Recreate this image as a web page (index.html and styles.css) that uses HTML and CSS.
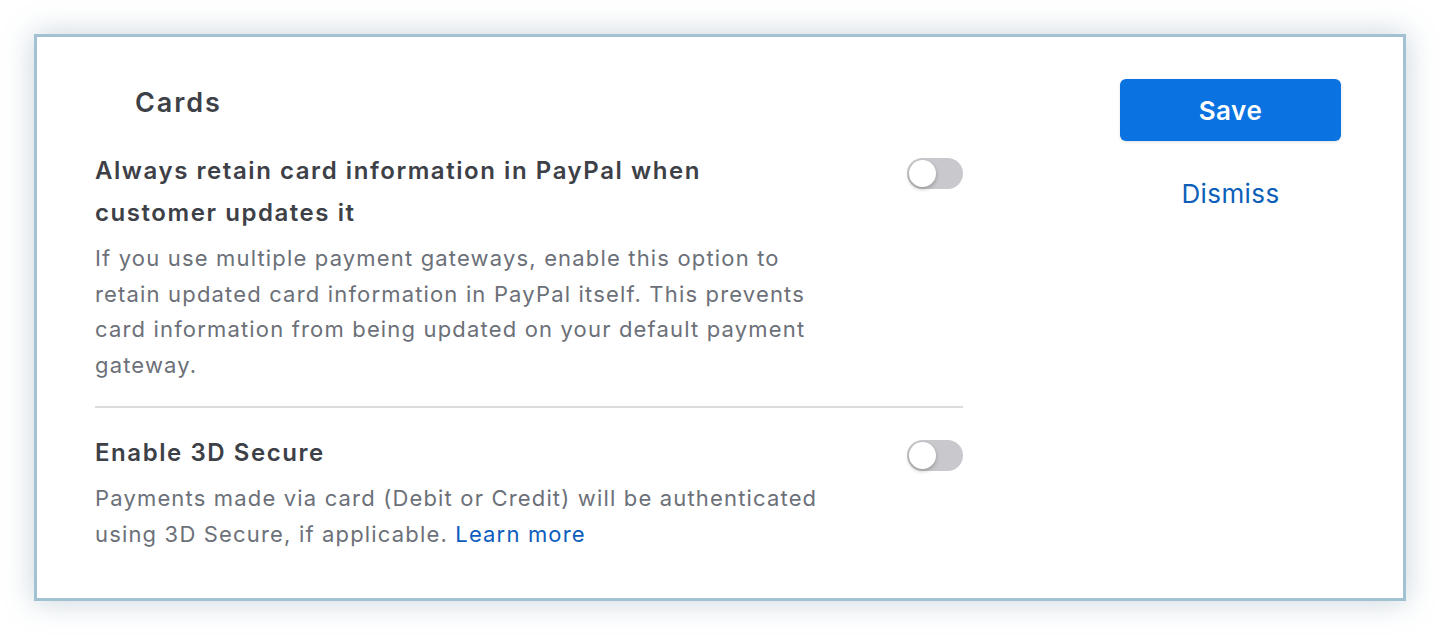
FILE: index.html
```html
<!DOCTYPE html>
<html lang="en">
<head>
    <meta charset="UTF-8">
    <meta name="viewport" content="width=device-width, initial-scale=1.0">
    <title>Cards</title>
    <link rel="stylesheet" href="styles.css">
</head>

<body>

    <section class="panel">
        <div class="settings">
            <h2 class="settings-title">Cards</h2>

            <div class="option">
                <div class="option-text">
                    <h3>Always retain card information in PayPal when customer updates it</h3>
                    <p>If you use multiple payment gateways, enable this option to retain updated card information in PayPal itself. This prevents card information from being updated on your default payment gateway.</p>
                </div>
                <span class="toggle"></span>
            </div>

            <div class="option">
                <div class="option-text">
                    <h3>Enable 3D Secure</h3>
                    <p>Payments made via card (Debit or Credit) will be authenticated using 3D Secure, if applicable. <a href="#">Learn more</a></p>
                </div>
                <span class="toggle"></span>
            </div>
        </div>

        <div class="actions">
            <button class="btn-save">Save</button>
            <a href="#" class="btn-dismiss">Dismiss</a>
        </div>
    </section>

</body>

</html>
```

FILE: styles.css
```css
body {
    margin: 0;
    padding: 34px;
    background-color: #fff;
    font-family: Inter, "Open Sans", sans-serif;
    color: #3d4147;
}

.panel {
    display: flex;
    gap: 157px;
    padding: 50px 62px 46px 58px;
    border: 3px solid #a3c2d1;
    background-color: #fff;
    box-shadow: 0 0 28px rgba(90, 125, 150, 0.35);
}

.settings {
    flex: 1;
}

.settings-title {
    margin: 0 0 31px 40px;
    font-size: 27px;
    line-height: 32px;
    font-weight: 600;
    letter-spacing: 0.07em;
}

.option {
    display: flex;
    justify-content: space-between;
    align-items: flex-start;
    border-bottom: 2px solid #dcdcdc;
    padding-bottom: 23px;
    margin-bottom: 24px;
}

.option:last-child {
    border-bottom: none;
    padding-bottom: 0;
    margin-bottom: 0;
}

.option-text {
    width: 745px;
}

.option h3 {
    max-width: 720px;
    margin: 0 0 7px;
    font-size: 24px;
    line-height: 42px;
    font-weight: 600;
    letter-spacing: 0.065em;
}

.option p {
    margin: 0;
    font-size: 22px;
    line-height: 35.5px;
    color: #6c7078;
    letter-spacing: 0.053em;
}

.option a {
    color: #0b5dbd;
    text-decoration: none;
}

.toggle {
    flex-shrink: 0;
    position: relative;
    width: 56px;
    height: 31px;
    margin-top: 8px;
    border-radius: 16px;
    background-color: #c8c8cd;
}

.toggle::after {
    content: "";
    position: absolute;
    left: 2px;
    top: 2px;
    width: 27px;
    height: 27px;
    border-radius: 50%;
    background-color: #fff;
    box-shadow: 0 2px 4px rgba(0, 0, 0, 0.25);
}

.actions {
    display: flex;
    flex-direction: column;
    align-items: center;
    width: 221px;
    margin-top: -8px;
}

.btn-save {
    width: 221px;
    height: 62px;
    border: none;
    border-radius: 6px;
    background-color: #0a73e1;
    color: #fff;
    font-family: inherit;
    font-size: 26px;
    font-weight: 600;
    letter-spacing: 0.02em;
    box-shadow: 0 1px 3px rgba(0, 0, 0, 0.12);
}

.btn-dismiss {
    margin-top: 37px;
    font-size: 26px;
    line-height: 32px;
    color: #0d5fb8;
    letter-spacing: 0.015em;
    text-decoration: none;
}
```
